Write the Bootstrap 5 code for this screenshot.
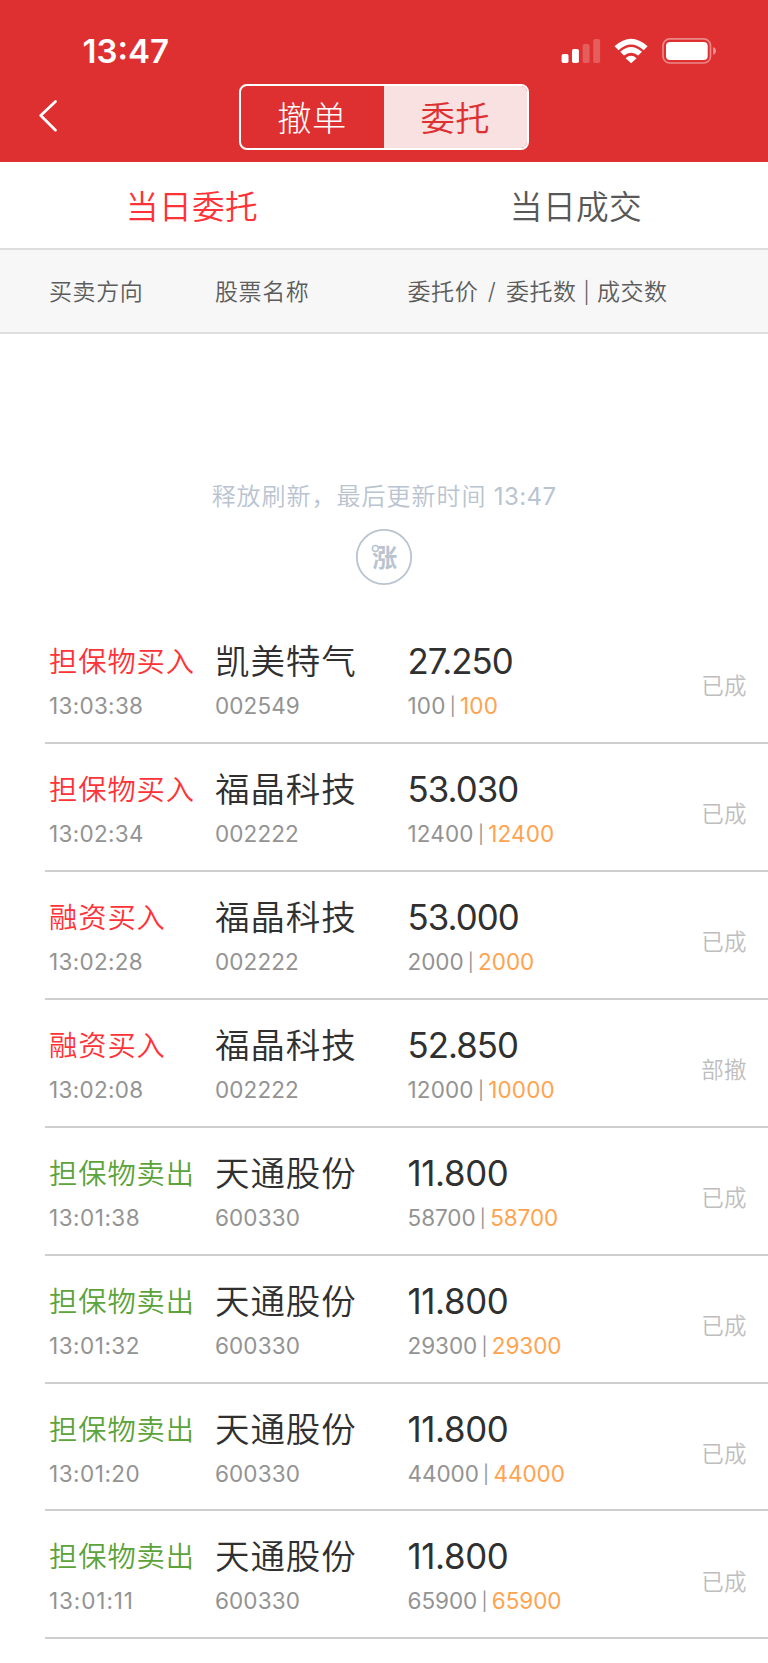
<!DOCTYPE html>
<html lang="zh-CN">
<head>
<meta charset="utf-8">
<meta name="viewport" content="width=device-width, initial-scale=1">
<title>当日委托</title>
<link href="https://cdn.jsdelivr.net/npm/bootstrap@5.3.0/dist/css/bootstrap.min.css" rel="stylesheet">
<style>
body{font-family:Inter,"Noto Sans CJK SC",sans-serif;color:#303030;background:#fff;overflow:hidden}
.topbar{background:#de3031;height:162.4px}
.statusbar{height:84px;padding:20px 0 0 82.5px}
.clock{font-size:33px;font-weight:600;line-height:63px}
.seg{width:290.5px;height:66px;border:2px solid #fff;border-radius:8px;overflow:hidden;font-size:34.3px;font-weight:300;line-height:65px;letter-spacing:.6px;margin-left:182px}
.seg-on{background:#fae1e1;color:#de3031;font-weight:350}
.tabs-row{height:88px;border-bottom:2px solid #dedede;font-size:32.7px;font-weight:350;line-height:90px;letter-spacing:.4px;color:#585858}
.tab-on{color:#ff3237}
.colhead{height:84px;background:#f7f7f7;border-bottom:2px solid #dedede;color:#5c5c5c;font-size:23px;font-weight:350;line-height:84px;letter-spacing:.6px;padding-left:49px}
.c1{width:166px}.c2{width:192.5px}
.slash{padding:0 9.5px}
.pipe{padding:0 6.5px;font-size:21px}
.refresh{height:281.5px;color:#b9c4d0;padding-top:143px}
.refresh-text{font-size:24px;font-weight:350;line-height:40px;letter-spacing:1px}
.refresh-text span{font-weight:400;letter-spacing:.4px}
.ring{margin-top:9.5px}
.order{height:127.94px;margin-left:45px;padding:21px 21px 0 4px;border-bottom:2px solid #cfcfcf}
.l1{height:48px;line-height:50px}
.l2{height:40px;line-height:42px;font-size:22.5px;color:#939393;letter-spacing:.1px}
.act{font-size:28.3px;font-weight:350;letter-spacing:.9px}
.sname{font-size:34.5px;font-weight:350;letter-spacing:.9px}
.price{font-size:34.8px;line-height:48px}
.buy{color:#ff3237}.sell{color:#5ba33a}
.vbar{width:14.5px;font-size:18px;line-height:43px}
.filled{color:#ffa34f}
.state{font-size:22.5px;font-weight:350;letter-spacing:.4px;color:#bebebe;line-height:50px;padding-top:24.5px}
</style>
</head>
<body>
<header class="topbar text-white">
  <div class="statusbar d-flex">
    <div class="clock">13:47</div>
    <svg class="ms-auto" width="207" height="64" viewBox="561 20 207 64" fill="#fff">
      <rect x="561.6" y="54" width="6.9" height="9" rx="1.8"/>
      <rect x="572" y="49" width="6.9" height="14" rx="1.8"/>
      <g opacity=".22"><rect x="582.7" y="44" width="6.9" height="19" rx="1.8"/><rect x="593.2" y="39" width="6.9" height="24" rx="1.8"/></g>
      <path d="M614.6 46.3Q631 31.3 647.6 46.3L643.7 50.2Q631 38.9 618.5 50.2Z"/>
      <path d="M620.2 51.8Q631 42.3 642 51.8L638.2 55.6Q631 50.1 624 55.6Z"/>
      <path d="M625.6 58.2Q631 53.4 636.6 58.2L631.1 63.3Z"/>
      <rect x="663" y="38.8" width="47.5" height="24.2" rx="6.8" fill="none" stroke="#fff" stroke-opacity=".42" stroke-width="1.7"/>
      <rect x="666" y="42" width="41.7" height="18" rx="4"/>
      <path d="M713.2 47Q716 48.2 716 51T713.2 55Z" opacity=".5"/>
    </svg>
  </div>
  <nav class="d-flex">
    <svg width="56.5" height="66" viewBox="0 84 56.5 66" class="flex-shrink-0 overflow-visible"><path d="M55.5 101.4L40.7 115.5L55.5 130.3" fill="none" stroke="#fff" stroke-width="2.7" stroke-linecap="round" stroke-linejoin="round"/></svg>
    <div class="seg d-flex text-center"><div class="w-50">撤单</div><div class="w-50 seg-on">委托</div></div>
  </nav>
</header>
<div class="tabs-row d-flex text-center"><div class="w-50 tab-on">当日委托</div><div class="w-50">当日成交</div></div>
<div class="colhead d-flex"><div class="c1">买卖方向</div><div class="c2">股票名称</div><div>委托价<span class="slash">/</span>委托数<span class="pipe">|</span>成交数</div></div>
<div class="refresh text-center">
  <div class="refresh-text">释放刷新，最后更新时间<span> 13:47</span></div>
  <svg width="60" height="60" viewBox="354 527 60 60" class="ring d-block mx-auto">
    <circle cx="384" cy="557" r="27.2" fill="none" stroke="#b9c4d0" stroke-width="1.8"/>
    <text x="372.3" y="566.6" font-size="25" font-weight="700" fill="#b9c4d0">涨</text>
    <circle cx="375.4" cy="548.6" r="3" fill="#fff" stroke="#b9c4d0" stroke-width="1.5"/>
  </svg>
</div>
<main id="orders"></main>
<script src="https://cdn.jsdelivr.net/npm/bootstrap@5.3.0/dist/js/bootstrap.bundle.min.js"></script>
<script>
const orders=[
 ["buy","担保物买入","13:03:38","凯美特气","002549","27.250","100","100","已成"],
 ["buy","担保物买入","13:02:34","福晶科技","002222","53.030","12400","12400","已成"],
 ["buy","融资买入","13:02:28","福晶科技","002222","53.000","2000","2000","已成"],
 ["buy","融资买入","13:02:08","福晶科技","002222","52.850","12000","10000","部撤"],
 ["sell","担保物卖出","13:01:38","天通股份","600330","11.800","58700","58700","已成"],
 ["sell","担保物卖出","13:01:32","天通股份","600330","11.800","29300","29300","已成"],
 ["sell","担保物卖出","13:01:20","天通股份","600330","11.800","44000","44000","已成"],
 ["sell","担保物卖出","13:01:11","天通股份","600330","11.800","65900","65900","已成"]];
// The narrow digit 1 is evened out with a little extra tracking.
const track=(s,base,step)=>`letter-spacing:${(base+step*(s.split("1").length-1)).toFixed(2)}px`;
document.getElementById("orders").innerHTML=orders.map(([k,a,t,n,c,p,q,f,s])=>`
<div class="order d-flex">
  <div class="c1"><div class="l1 act ${k}">${a}</div><div class="l2" style="${track(t,.1,.2)}">${t}</div></div>
  <div class="c2"><div class="l1 sname">${n}</div><div class="l2">${c}</div></div>
  <div><div class="l1 price" style="${track(p,-.95,.3)}">${p}</div><div class="l2 d-flex"><span style="${track(q,-.05,.2)}">${q}</span><span class="vbar text-center">|</span><span class="filled" style="${track(f,-.05,.2)}">${f}</span></div></div>
  <div class="state ms-auto">${s}</div>
</div>`).join("");
</script>
</body>
</html>
